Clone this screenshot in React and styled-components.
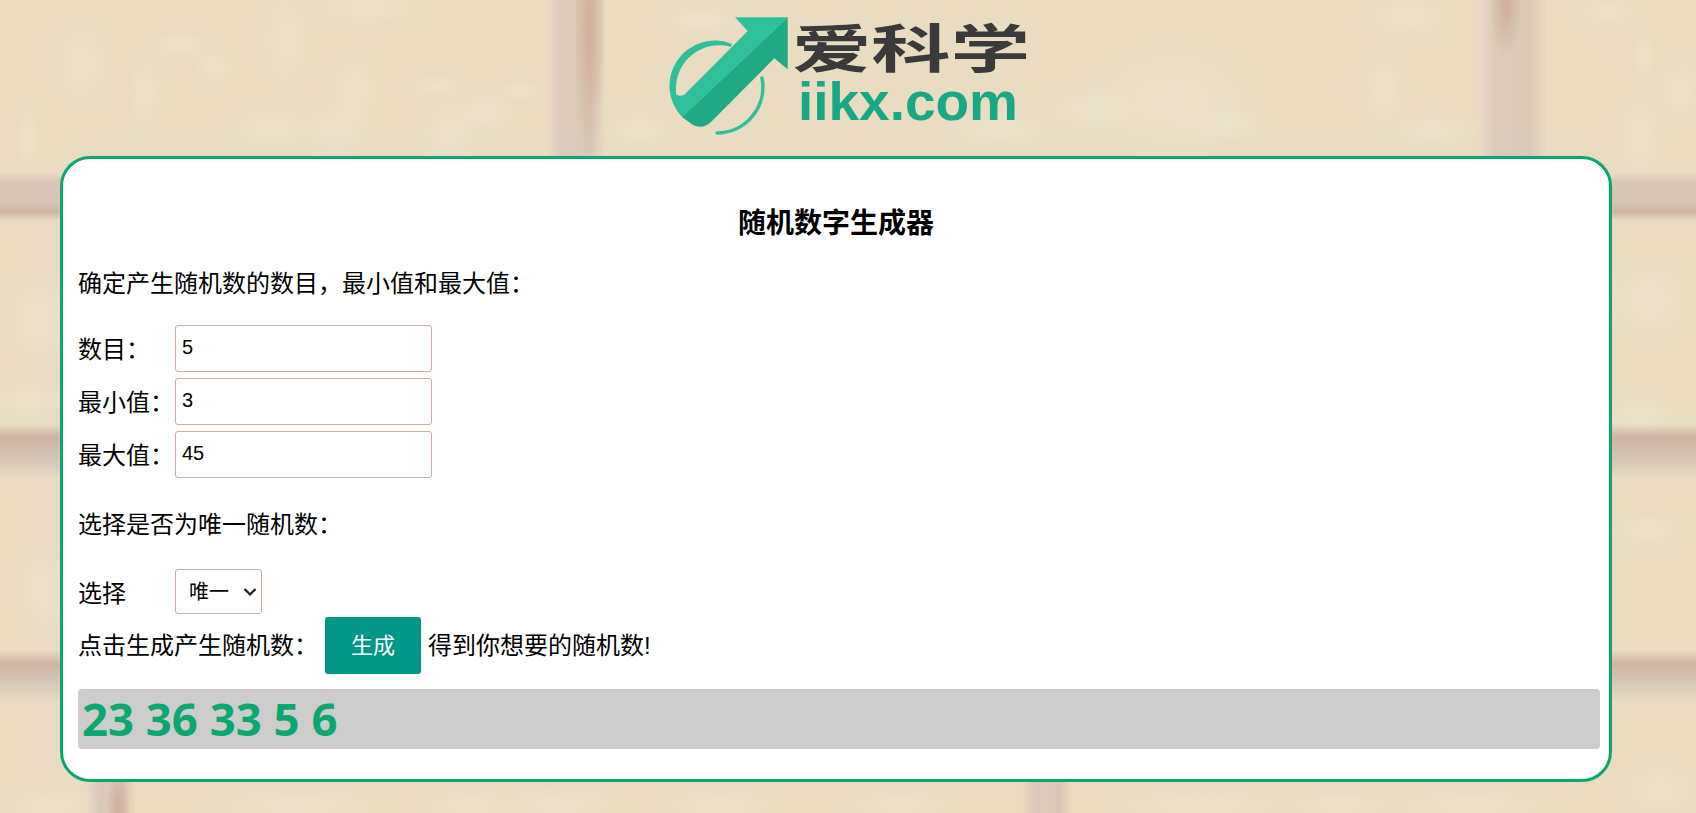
import React from "react";
import styled, { createGlobalStyle } from "styled-components";

const GREEN = "#0aa86f";
const CJK = `"Liberation Sans", "Noto Sans CJK SC", sans-serif`;

// pale patches of the paper texture: x, y, rx, ry
const patches = [
  [286, 40, 26, 52], [355, 90, 26, 42], [145, 93, 18, 38], [82, 63, 30, 44], [180, 45, 34, 14],
  [214, 65, 22, 18], [270, 128, 48, 24], [335, 128, 40, 30], [449, 130, 30, 34], [486, 113, 34, 24],
  [437, 87, 32, 12], [367, 8, 60, 18], [28, 137, 14, 32], [520, 90, 24, 12],
  [1174, 100, 90, 60], [1226, 125, 46, 18], [1092, 110, 50, 26], [1384, 90, 26, 40], [1433, 130, 46, 20],
  [1409, 18, 46, 24], [1644, 55, 14, 26], [1640, 135, 26, 44], [1608, 12, 32, 18], [1681, 90, 24, 32],
  [700, 20, 44, 16], [1000, 130, 60, 22], [640, 130, 36, 22],
  [35, 320, 32, 50], [28, 400, 36, 20], [42, 590, 26, 44], [1650, 300, 46, 44], [1640, 415, 44, 18],
  [1648, 530, 36, 18], [50, 806, 50, 22], [300, 806, 100, 20], [470, 806, 54, 18], [560, 804, 70, 20],
  [720, 806, 64, 22], [900, 806, 60, 18], [1200, 806, 100, 20], [1340, 806, 60, 16], [1470, 806, 90, 18],
  [1660, 790, 40, 28],
];

const patchLayers = patches
  .map(
    ([x, y, rx, ry]) =>
      `radial-gradient(ellipse ${rx}px ${ry}px at ${x}px ${y}px, rgba(238,230,212,.6), rgba(238,230,212,0))`
  )
  .join(",");

const band = (a, b, c, d, e) =>
  `linear-gradient(to bottom, rgba(214,198,182,0) ${a}px, rgba(215,199,184,.95) ${b}px, rgba(213,195,180,.95) ${c}px, rgba(207,177,160,.95) ${d}px, rgba(214,198,182,0) ${e}px)`;

const bandFlipped = (a, b, c, d) =>
  `linear-gradient(to bottom, rgba(214,198,182,0) ${a}px, rgba(207,177,160,.95) ${b}px, rgba(214,199,188,.95) ${c}px, rgba(214,198,182,0) ${d}px)`;

const stripe = (x, w, y, h) =>
  `linear-gradient(to right, rgba(214,196,180,0), rgba(216,200,186,.9) 25%, rgba(216,198,182,.9) 75%, rgba(214,196,180,0)) ${x}px ${y}px / ${w}px ${h}px no-repeat`;

const seam = (x, y, rx, ry) =>
  `radial-gradient(ellipse ${rx}px ${ry}px at ${x}px ${y}px, rgba(207,176,158,.9) 15%, rgba(207,176,158,0))`;

const chevron = encodeURIComponent(
  `<svg xmlns="http://www.w3.org/2000/svg" width="16" height="16"><path d="M2.5 5L8 10.5L13.5 5" fill="none" stroke="#1a1a1a" stroke-width="2.2"/></svg>`
);

const GlobalStyle = createGlobalStyle`
  html, body {
    margin: 0;
    padding: 0;
  }
  body {
    font-family: ${CJK};
    color: #000;
  }
`;

const Page = styled.div`
  min-height: 100vh;
  box-sizing: border-box;
  background:
    ${patchLayers},
    ${seam(590, 30, 16, 130)},
    ${seam(1506, 6, 16, 50)},
    ${seam(118, 806, 12, 40)},
    ${band(172, 182, 203, 212, 221)},
    ${bandFlipped(424, 437, 462, 478)},
    ${bandFlipped(650, 664, 684, 702)},
    ${stripe(547, 58, 0, 176)},
    ${stripe(1478, 69, 0, 176)},
    ${stripe(86, 50, 782, 31)},
    ${stripe(1022, 50, 782, 31)},
    #e9dcc1;
`;

const Header = styled.header`
  box-sizing: border-box;
  height: 156px;
  padding: 10px 0 0 4px;
  display: flex;
  justify-content: center;
`;

const LogoSvg = styled.svg`
  display: block;
  width: 380px;
  height: 136px;
`;

const Card = styled.main`
  box-sizing: border-box;
  width: 1552px;
  margin-left: 60px;
  padding: 30px 9px 30px 15px;
  height: 626px;
  background: #fff;
  border: 3px solid ${GREEN};
  border-radius: 30px;
`;

const Title = styled.h1`
  margin: 17px 0 24px;
  padding-right: 6px;
  font-size: 28px;
  line-height: 36px;
  font-weight: 700;
  text-align: center;
`;

const Note = styled.p`
  margin: ${({ $top }) => $top}px 0 ${({ $bottom }) => $bottom}px;
  font-size: 24px;
  line-height: 36px;
`;

const FieldList = styled.div`
  display: flex;
  flex-direction: column;
  gap: 6px;
`;

const Field = styled.label`
  display: flex;
  align-items: center;
  font-size: 24px;
  line-height: 36px;
`;

const FieldName = styled.span`
  width: 97px;
  flex: none;
  padding-top: ${({ $shift }) => $shift || 2}px;
`;

const NumberInput = styled.input`
  box-sizing: border-box;
  width: 257px;
  height: 47px;
  padding: 0 6px 3px;
  border: 1px solid #cdab98;
  border-radius: 3px;
  background: #fff;
  color: #000;
  font-family: "Liberation Sans", sans-serif;
  font-size: 20px;
  outline: none;
`;

const ChoiceSelect = styled.select`
  appearance: none;
  box-sizing: border-box;
  width: 87px;
  height: 45px;
  padding: 0 24px 0 13px;
  border: 1px solid #cdab98;
  border-radius: 3px;
  background: #fff url("data:image/svg+xml,${chevron}") no-repeat 66px 14px;
  color: #000;
  font-family: ${CJK};
  font-size: 20px;
  outline: none;
`;

const ActionRow = styled.div`
  display: flex;
  align-items: center;
  margin-top: 3px;
  font-size: 24px;
  line-height: 36px;
`;

const GenerateButton = styled.button`
  box-sizing: border-box;
  width: 96px;
  height: 57px;
  margin: 0 7px 0 7px;
  padding: 0 0 5px;
  border: 0;
  border-radius: 3px;
  background: #009688;
  color: #fff;
  font-family: ${CJK};
  font-size: 22px;
  cursor: pointer;
`;

const Result = styled.div`
  height: 60px;
  margin-top: 15px;
  padding: 0 4px;
  border-radius: 4px;
  background: #ccc;
  color: ${GREEN};
  font-family: "Open Sans", sans-serif;
  font-size: 45.5px;
  font-weight: 700;
  line-height: 58px;
`;

const Logo = () => (
  <LogoSvg viewBox="0 0 380 136" role="img" aria-label="爱科学 iikx.com">
    <path
      d="M75 7.3H127.7L22 107A45.2 45.2 0 0 1 72 34L71 37A43 43 0 0 0 16 80Q15 88 24 85L87.7 21Z"
      fill="#2ec09b"
    />
    <path
      d="M127.7 7.3V59.3L114.3 48.3L52 111Q43 120 33 115L22 107Z"
      fill="#1fa985"
    />
    <path
      d="M102 68A46 46 0 0 1 57 123"
      fill="none"
      stroke="#2ec09b"
      strokeWidth="3.5"
      strokeLinecap="round"
    />
    <text
      x="132"
      y="58"
      fontFamily='"Noto Sans CJK SC", sans-serif'
      fontSize="52"
      fontWeight="700"
      fill="#3a3a3a"
      textLength="238"
      lengthAdjust="spacingAndGlyphs"
    >
      爱科学
    </text>
    <text
      x="138"
      y="110"
      fontFamily='"Liberation Sans", sans-serif'
      fontSize="54"
      fontWeight="700"
      fill="#18a883"
      textLength="220"
      lengthAdjust="spacingAndGlyphs"
    >
      iikx.com
    </text>
  </LogoSvg>
);

export default function App() {
  return (
    <Page>
      <GlobalStyle />
      <Header>
        <Logo />
      </Header>
      <Card>
        <Title>随机数字生成器</Title>
        <Note $top={0} $bottom={23}>
          确定产生随机数的数目，最小值和最大值：
        </Note>
        <FieldList>
          <Field>
            <FieldName>数目：</FieldName>
            <NumberInput defaultValue="5" />
          </Field>
          <Field>
            <FieldName>最小值：</FieldName>
            <NumberInput defaultValue="3" />
          </Field>
          <Field>
            <FieldName>最大值：</FieldName>
            <NumberInput defaultValue="45" />
          </Field>
        </FieldList>
        <Note $top={29} $bottom={26}>
          选择是否为唯一随机数：
        </Note>
        <Field>
          <FieldName $shift={5}>选择</FieldName>
          <ChoiceSelect defaultValue="unique">
            <option value="unique">唯一</option>
            <option value="repeat">重复</option>
          </ChoiceSelect>
        </Field>
        <ActionRow>
          点击生成产生随机数：
          <GenerateButton type="button">生成</GenerateButton>
          得到你想要的随机数!
        </ActionRow>
        <Result>23 36 33 5 6</Result>
      </Card>
    </Page>
  );
}
